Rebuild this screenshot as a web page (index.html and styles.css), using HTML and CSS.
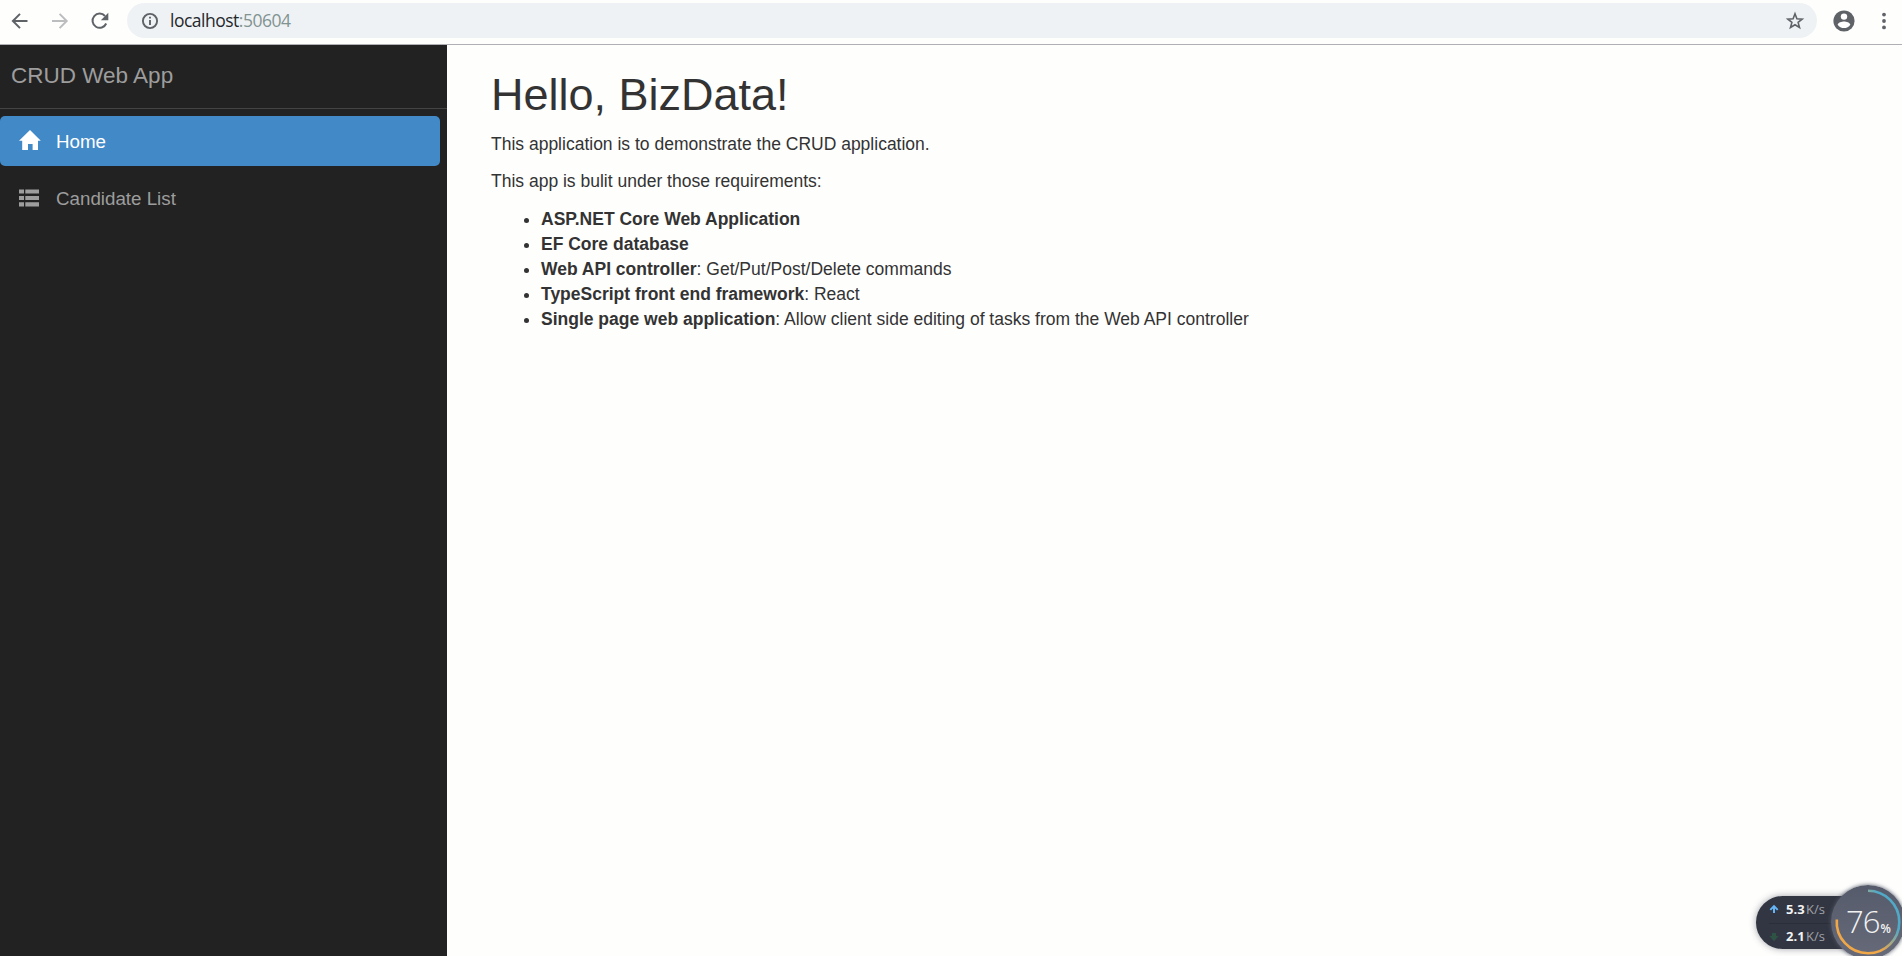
FILE: index.html
```html
<!DOCTYPE html>
<html lang="en">
<head>
<meta charset="utf-8">
<title>CRUD Web App</title>
<link rel="stylesheet" href="styles.css">
</head>
<body>
<header class="toolbar">
  <svg class="tool back" width="20" height="20" viewBox="0 0 20 20"><path d="M17.5 10H3M10 2.9 2.9 10l7.1 7.1"/></svg>
  <svg class="tool forward" width="20" height="20" viewBox="0 0 20 20"><path d="M2 10h14.5M9.6 2.9l7.1 7.1-7.1 7.1"/></svg>
  <svg class="tool reload" width="20" height="20" viewBox="0 0 20 20"><path d="M16.2 12.5A7.1 7.1 0 1 1 15 5"/><path class="solid" d="M18.3 1.8v7.5h-7.5z"/></svg>
  <div class="address">
    <svg class="info" width="18" height="18" viewBox="0 0 18 18"><circle cx="9" cy="9" r="7.1"/><path d="M9 8v5M9 4.7v1.9"/></svg>
    <span class="url">localhost<span class="port">:50604</span></span>
    <svg class="star" width="20" height="20" viewBox="0 0 20 20"><path d="m10 2.8 1.9 4.9 5.3.4-4.1 3.3 1.4 5.1L10 13.7l-4.5 2.8 1.4-5.1-4.1-3.3 5.3-.4z"/></svg>
  </div>
  <svg class="profile" width="22" height="22" viewBox="0 0 22 22"><circle class="disc" cx="11" cy="11" r="10.6"/><circle cx="11" cy="6.6" r="3.2"/><path d="M4.7 14.7c0-2.1 4.2-3.3 6.3-3.3s6.3 1.2 6.3 3.3a7.6 7.6 0 0 1-12.6 0z"/></svg>
  <svg class="more" width="6" height="20" viewBox="0 0 6 20"><circle cx="3" cy="3.6" r="1.9"/><circle cx="3" cy="10" r="1.9"/><circle cx="3" cy="16.4" r="1.9"/></svg>
</header>
<div class="page">
  <nav class="sidebar">
    <div class="brand">CRUD Web App</div>
    <ul class="menu">
      <li class="item active">
        <svg width="22" height="20" viewBox="0 0 22 20"><path d="M11 0 21.8 10.8H19V20h-5.4v-6H9v6H3.2v-9.2H0L11 0z"/></svg>
        <span>Home</span>
      </li>
      <li class="item">
        <svg width="22" height="20" viewBox="0 0 22 20"><path d="M0 2.5h5v4H0zM6.3 2.5H20v4H6.3zM0 9h5v4H0zM6.3 9H20v4H6.3zM0 15.3h5v4.2H0zM6.3 15.3H20v4.2H6.3z"/></svg>
        <span>Candidate List</span>
      </li>
    </ul>
  </nav>
  <main class="content">
    <h1>Hello, BizData!</h1>
    <p>This application is to demonstrate the CRUD application.</p>
    <p>This app is bulit under those requirements:</p>
    <ul>
      <li><strong>ASP.NET Core Web Application</strong></li>
      <li><strong>EF Core database</strong></li>
      <li><strong>Web API controller</strong>: Get/Put/Post/Delete commands</li>
      <li><strong>TypeScript front end framework</strong>: React</li>
      <li><strong>Single page web application</strong>: Allow client side editing of tasks from the Web API controller</li>
    </ul>
  </main>
</div>
<aside class="monitor">
  <div class="rates">
    <div class="rate"><svg width="10" height="10" viewBox="0 0 10 10"><path class="up" d="M5 .8 9.4 5.2 8 6.4l-2-1.8V9H4V4.6L2 6.4.6 5.2z"/></svg><b>5.3</b><span>K/s</span></div>
    <div class="rate"><svg width="10" height="10" viewBox="0 0 10 10"><path class="down" d="M3 1h4v3h2.6L5 9.2.4 4H3z"/></svg><b>2.1</b><span>K/s</span></div>
  </div>
  <div class="gauge">
    <svg class="ring" width="74" height="74" viewBox="0 0 74 74">
      <defs><linearGradient id="arc" x1="0.9" y1="0.55" x2="0.5" y2="1"><stop offset="0" stop-color="#50a9c7"/><stop offset="1" stop-color="#f0a748"/></linearGradient></defs>
      <path stroke="url(#arc)" d="M37 5.7A31.3 31.3 0 0 1 37 68.3"/>
      <path stroke="#f0a748" d="M37 68.3A31.3 31.3 0 0 1 5.8 34.5"/>
    </svg>
    <span class="load">76</span><span class="percent">%</span>
  </div>
</aside>
</body>
</html>
```
FILE: styles.css
```css
* { box-sizing: border-box; }
body {
  margin: 0;
  height: 956px;
  overflow: hidden;
  display: flex;
  flex-direction: column;
  background: #fefefd;
  color: #333;
  font: 17.5px/25px "Liberation Sans", Arial, sans-serif;
}
.toolbar {
  flex: none;
  height: 45px;
  padding: 3px 15px 6px 10px;
  border-bottom: 1px solid #afafb4;
  display: flex;
  align-items: center;
}
.tool { flex: none; margin-right: 20px; fill: none; stroke: #5f6368; stroke-width: 2; }
.forward { stroke: #bcbdbe; }
.reload { margin-right: 17px; }
.solid { fill: #5f6368; stroke: none; }
.address {
  flex: 1;
  height: 35px;
  padding: 0 12px 0 14px;
  border-radius: 18px;
  background: #eff2f4;
  display: flex;
  align-items: center;
}
.info { fill: none; stroke: #5f6368; stroke-width: 1.9; }
.url { flex: 1; margin: -2px 0 0 11px; font: 17.5px/24px "Open Sans", "Noto Sans", sans-serif; letter-spacing: -0.5px; color: #25282b; }
.port { color: #829392; }
.star { fill: none; stroke: #5f6368; stroke-width: 1.6; }
.profile { margin-left: 16px; fill: #fff; }
.disc { fill: #5f6368; }
.more { margin-left: 26px; fill: #5f6368; }
.page { flex: 1; display: flex; }
.sidebar { width: 447px; background: #222; color: #9d9d9d; }
.brand { height: 64px; padding: 18px 11px 0; border-bottom: 1px solid #444; font-size: 22.5px; }
.menu { margin: 0; padding: 7px 7px 0 0; list-style: none; display: flex; flex-direction: column; gap: 7px; }
.item { height: 50px; padding-left: 19px; border-radius: 5px; display: flex; align-items: center; gap: 15px; font-size: 18.75px; }
.item svg { fill: currentColor; margin-top: -3px; }
.active { background: #4189c7; color: #fff; }
.content { padding: 25px 44px; }
h1 { margin: 0 0 12px; font-size: 45px; line-height: 49.5px; font-weight: 400; }
p { margin: 0 0 12.5px; }
.content ul { margin: 0; padding-left: 50px; }
.monitor { position: absolute; right: -3px; bottom: -4px; width: 149px; height: 76px; display: flex; align-items: center; }
.rates {
  width: 101px;
  height: 53px;
  margin-right: -26px;
  padding-left: 13px;
  border-radius: 27px 0 0 27px;
  background: #323642;
  box-shadow: 0 0 7px rgba(50, 54, 66, .45);
}
.rate { height: 27px; display: flex; align-items: center; font: 13px/27px "Open Sans", sans-serif; color: #a0a2a9; }
.rate + .rate { border-top: 1px solid #2b2e38; }
.rate b { width: 20px; margin-left: 7px; color: #f3f3f3; }
.up { fill: #65b4f5; }
.down { fill: #2e5345; }
.gauge {
  position: relative;
  flex: none;
  width: 74px;
  height: 74px;
  padding: 1px 0 0 15px;
  border-radius: 50%;
  background: linear-gradient(#565b6b, #666a79);
  box-shadow: 0 0 4px #555a68;
  display: flex;
  align-items: baseline;
  color: #f2f2f2;
}
.ring { position: absolute; left: 0; top: 0; fill: none; stroke-width: 2.6; }
.load { font: 300 31px/70px "Open Sans", sans-serif; letter-spacing: -1px; }
.percent { margin-left: 1px; font: 600 12px/20px "Open Sans", sans-serif; }
```
